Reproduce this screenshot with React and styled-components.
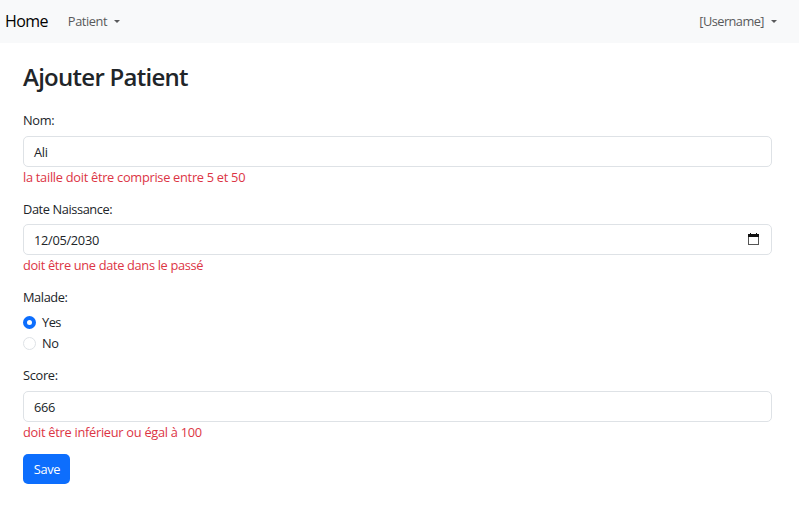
import React from "react";
import styled, { createGlobalStyle } from "styled-components";

const GlobalStyle = createGlobalStyle`
  *, *::before, *::after { box-sizing: border-box; }
  body {
    margin: 0;
    background: #fff;
    color: #212529;
    font: 400 12.8px/19px "Open Sans", "Noto Sans", sans-serif;
    letter-spacing: -0.3px;
  }
`;

const Navbar = styled.nav`
  display: flex;
  align-items: center;
  height: 43px;
  padding: 0 22px 0 5px;
  background: #f8f9fa;
`;

const Brand = styled.a`
  margin-right: 20px;
  padding-bottom: 2px;
  color: #000;
  font-size: 16px;
  line-height: 24px;
  letter-spacing: -0.6px;
`;

const NavToggle = styled.a`
  display: flex;
  align-items: center;
  color: #595a5b;
  letter-spacing: ${(p) => p.$spacing || "-0.3px"};
  margin-left: ${(p) => (p.$end ? "auto" : "0")};

  &::after {
    content: "";
    margin-left: 7px;
    border-top: 3px solid currentColor;
    border-right: 3px solid transparent;
    border-left: 3px solid transparent;
  }
`;

const Page = styled.main`
  padding: 19px 27px 0 23px;
`;

const Title = styled.h2`
  margin: 0 0 19px;
  font-size: 24px;
  font-weight: 600;
  line-height: 30px;
  letter-spacing: -0.73px;
`;

const Field = styled.div`
  height: ${(p) => p.$height || "88px"};
`;

const Label = styled.label`
  display: block;
  width: fit-content;
  height: ${(p) => (p.$tight ? "24px" : "25px")};
  letter-spacing: ${(p) => p.$spacing || "-0.3px"};
`;

const Control = styled.div`
  display: flex;
  align-items: center;
  justify-content: space-between;
  height: 31px;
  padding: 1px 12px 0 10px;
  border: 1px solid #dee2e6;
  border-radius: 5px;
`;

const ErrorText = styled.p`
  margin: 1px 0 0;
  width: fit-content;
  color: #dc3545;
  letter-spacing: ${(p) => p.$spacing || "-0.3px"};
`;

const Choice = styled.label`
  display: flex;
  align-items: center;
  gap: 6px;
  height: 21px;
  letter-spacing: ${(p) => p.$spacing || "-0.3px"};
`;

const Radio = styled.span`
  width: 13px;
  height: 13px;
  border-radius: 50%;
  border: ${(p) => (p.$checked ? "4px solid #0d6efd" : "1px solid #dee2e6")};
  background: #fff;
`;

const SaveButton = styled.button`
  width: 47px;
  height: 30px;
  padding: 0 0 0 1px;
  border: 0;
  border-radius: 5px;
  background: #0d6efd;
  color: #fff;
  font: inherit;
  letter-spacing: -0.3px;
`;

const CalendarIcon = () => (
  <svg width="11" height="14" viewBox="0 0 11 14" shapeRendering="crispEdges">
    <path d="M0 1h11v3H0zM2 0h1v1H2zM8 0h1v1H8z" fill="#111" />
    <path d="M0.5 4v7.5h10V4" fill="none" stroke="#555" />
  </svg>
);

export default function App() {
  return (
    <>
      <GlobalStyle />
      <Navbar>
        <Brand>Home</Brand>
        <NavToggle $spacing="-0.4px">Patient</NavToggle>
        <NavToggle $end $spacing="-0.55px">[Username]</NavToggle>
      </Navbar>
      <Page>
        <Title>Ajouter Patient</Title>
        <Field $height="89px">
          <Label>Nom:</Label>
          <Control>Ali</Control>
          <ErrorText $spacing="-0.28px">la taille doit être comprise entre 5 et 50</ErrorText>
        </Field>
        <Field>
          <Label $tight $spacing="-0.4px">Date Naissance:</Label>
          <Control>
            12/05/2030
            <CalendarIcon />
          </Control>
          <ErrorText $spacing="-0.33px">doit être une date dans le passé</ErrorText>
        </Field>
        <Field $height="78px">
          <Label $tight $spacing="-0.4px">Malade:</Label>
          <Choice $spacing="-0.5px"><Radio $checked />Yes</Choice>
          <Choice><Radio />No</Choice>
        </Field>
        <Field>
          <Label>Score:</Label>
          <Control>666</Control>
          <ErrorText $spacing="-0.27px">doit être inférieur ou égal à 100</ErrorText>
        </Field>
        <SaveButton>Save</SaveButton>
      </Page>
    </>
  );
}
